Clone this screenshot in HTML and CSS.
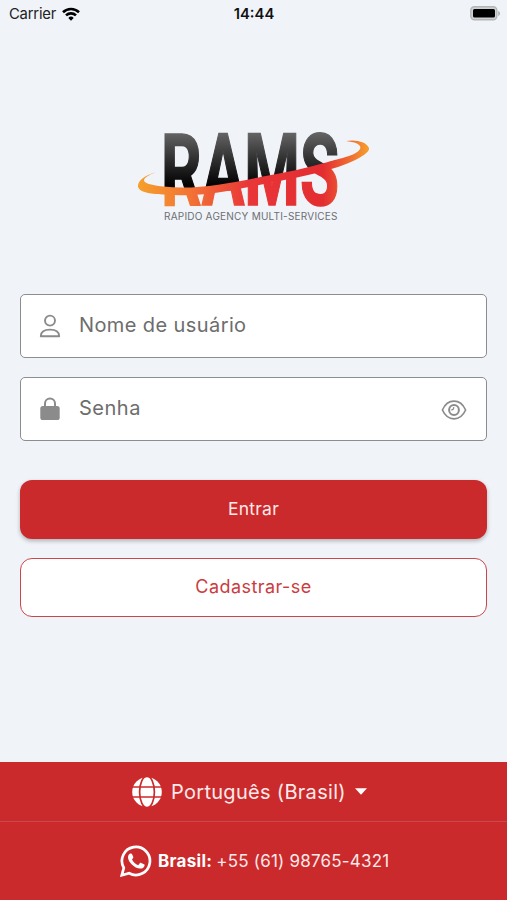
FILE: index.html
```
<!DOCTYPE html>
<html lang="pt-BR">
<head>
    <meta charset="UTF-8">
    <meta name="viewport" content="width=device-width, initial-scale=1.0">
    <title>RAMS</title>
    <link rel="stylesheet" href="styles.css">
</head>
<body>
    <div class="status-bar">
        <div class="carrier">
            <span>Carrier</span>
            <svg width="18" height="14" viewBox="0 0 18 14" fill="none" stroke="#000" stroke-width="2.6">
                <path d="M1 5.2a11.6 11.6 0 0 1 16 0"/>
                <path d="M4 8.4a7.2 7.2 0 0 1 10 0"/>
                <path d="M9 13.7L6.3 10.9a3.9 3.9 0 0 1 5.4 0z" fill="#000" stroke="none"/>
            </svg>
        </div>
        <span class="time">14:44</span>
        <svg class="battery" width="31" height="15" viewBox="0 0 31 15">
            <rect x=".8" y=".8" width="26" height="13" rx="3.5" fill="#cfd1d3" stroke="#b3b5b7" stroke-width="1.4"/>
            <rect x="3" y="3" width="22" height="8.6" rx="1.5" fill="#000"/>
            <path d="M28.2 5v5c2.4-1 2.4-4 0-5z" fill="#adafb1"/>
        </svg>
    </div>

    <div class="container">
        <svg class="logo" width="240" height="100" viewBox="134 126 240 100">
            <defs>
                <linearGradient id="dark" x1="0" y1="132" x2="0" y2="186" gradientUnits="userSpaceOnUse">
                    <stop offset="0" stop-color="#666"/>
                    <stop offset=".5" stop-color="#303030"/>
                    <stop offset="1" stop-color="#000"/>
                </linearGradient>
                <linearGradient id="fire" x1="138" y1="0" x2="369" y2="0" gradientUnits="userSpaceOnUse">
                    <stop offset="0" stop-color="#f5a02c"/>
                    <stop offset=".22" stop-color="#f37435"/>
                    <stop offset=".48" stop-color="#e93638"/>
                    <stop offset=".8" stop-color="#e32d31"/>
                    <stop offset=".91" stop-color="#ee6832"/>
                    <stop offset="1" stop-color="#f6a02c"/>
                </linearGradient>
                <pattern id="letters" x="134" y="126" width="240" height="100" patternUnits="userSpaceOnUse" viewBox="134 126 240 100">
                    <rect x="134" y="126" width="240" height="100" fill="url(#dark)"/>
                    <path d="M134 190C215 194 270 182 345 160V226H134z" fill="url(#fire)"/>
                </pattern>
            </defs>
            <text class="logo-name" x="161" y="205" textLength="178" lengthAdjust="spacingAndGlyphs" fill="url(#letters)" stroke="url(#letters)">RAMS</text>
            <path d="M156 172C144 176 139 180 138 185C137 192 149 194 163 194.5C190 197 218 193 236 189.5L297 177.5C312 174 326 171 338 167C358 160 370 153 369 148C367 142 356 139 346 141C356 142 362 145 360 149C356 156 339 158.5 328 162C307 168 284 173 263 176.5C227 184 195 190 163 186.5C139 184 139 179 156 172z" fill="url(#fire)"/>
            <text class="logo-tagline" x="164" y="220" textLength="173.5">RAPIDO AGENCY MULTI-SERVICES</text>
        </svg>

        <form class="login">
            <div class="field">
                <svg width="22" height="24" viewBox="0 0 22 24" fill="none" stroke="#8b8b8b" stroke-width="1.9">
                    <circle cx="11" cy="6.6" r="5"/>
                    <path d="M1.8 22.2c0-4.6 3.4-6.6 9.2-6.6s9.2 2 9.2 6.6z" stroke-linejoin="round"/>
                </svg>
                <span class="placeholder user">Nome de usuário</span>
            </div>
            <div class="field">
                <svg width="22" height="24" viewBox="0 0 22 24">
                    <path d="M6 10V6.5a5 5 0 0 1 10 0V10" fill="none" stroke="#8b8b8b" stroke-width="2"/>
                    <rect x="1.3" y="9" width="19.4" height="14" rx="2.6" fill="#8b8b8b"/>
                </svg>
                <span class="placeholder pass">Senha</span>
                <svg class="eye" width="26" height="20" viewBox="0 0 26 20" fill="none" stroke="#8b8b8b" stroke-width="1.7">
                    <path d="M1.4 10C4 4.2 8 1.2 13 1.2S22 4.2 24.6 10C22 15.8 18 18.8 13 18.8S4 15.8 1.4 10z" stroke-linejoin="round"/>
                    <circle cx="13" cy="10" r="4.9" stroke-width="2"/>
                    <path d="M12.6 7.2c.3 1.9-.6 2.8-2.4 2.6" stroke-width="1.3"/>
                </svg>
            </div>
            <button type="button" class="btn btn-primary">Entrar</button>
            <button type="button" class="btn btn-outline">Cadastrar-se</button>
        </form>
    </div>

    <div class="footer">
        <div class="language">
            <svg width="30" height="30" viewBox="0 0 30 30">
                <circle cx="15" cy="15" r="14.8" fill="#fff"/>
                <g fill="none" stroke="#cb2a2c" stroke-width="1.7">
                    <ellipse cx="15" cy="15" rx="7.4" ry="15.8"/>
                    <path d="M0 10h30M0 20h30"/>
                </g>
            </svg>
            <span class="language-name">Português (Brasil)</span>
            <svg class="caret" width="12" height="7" viewBox="0 0 12 7"><path d="M0 .3h12L6 6.8z" fill="#fff"/></svg>
        </div>
        <div class="contact">
            <svg width="32" height="32" viewBox="0 0 32 32">
                <path d="M1.8 30.2l2-7.3a14 14 0 1 1 5.4 5.3z" fill="none" stroke="#fff" stroke-width="2.7"/>
                <path d="M10.8 8.4c.7 0 1 .1 1.3.8l1.2 2.9c.2.6-.2 1.2-1.3 2.4 1.6 3 3.4 4.6 6.2 5.7l1.6-2c.4-.5.8-.5 1.3-.3l2.9 1.4c.6.3.7.6.5 1.4-.5 2-2.4 3-4.3 2.9C14.2 23.3 8 16.8 8 12.2c0-1.9 1-3.8 2.8-3.8z" fill="#fff"/>
            </svg>
            <strong>Brasil:</strong>
            <span class="phone">+55 (61) 98765-4321</span>
        </div>
    </div>
</body>
</html>
```
FILE: styles.css
```
* {
    box-sizing: border-box;
}

body {
    font-family: Inter, "Open Sans", sans-serif;
    background-color: #f0f4f9;
    display: flex;
    flex-direction: column;
    height: 900px;
    margin: 0;
}

.status-bar {
    display: grid;
    grid-template-columns: 1fr auto 1fr;
    align-items: center;
    height: 27px;
    padding: 0 6px 0 9px;
    font-size: 14.8px;
    color: #222;
}

.carrier {
    display: flex;
    align-items: center;
    gap: 6px;
    letter-spacing: -0.2px;
}

.time {
    margin-right: 2px;
    font-weight: 600;
    color: #111;
}

.battery {
    justify-self: end;
}

.container {
    flex: 1;
    display: flex;
    flex-direction: column;
    padding: 99px 20px 0;
}

.logo {
    margin-left: 114px;
    overflow: visible;
}

.logo-name {
    font-family: Roboto, sans-serif;
    font-size: 101px;
    font-weight: 700;
    stroke-width: 1.6px;
}

.logo-tagline {
    font-size: 10px;
    fill: #6c6e72;
}

.login {
    display: flex;
    flex-direction: column;
    margin-top: 68px;
}

.field {
    display: flex;
    align-items: center;
    height: 64px;
    margin-bottom: 19px;
    padding: 0 19px 0 18px;
    background-color: #fff;
    border: 1.5px solid #8b8d8f;
    border-radius: 5px;
}

.placeholder {
    flex: 1;
    margin-left: 18px;
    padding-bottom: 3px;
    font-size: 20px;
    color: #6d6d6d;
}

.user {
    letter-spacing: 0.4px;
}

.pass {
    letter-spacing: 0.5px;
}

.eye {
    margin-top: 1px;
}

.btn {
    height: 59px;
    padding-bottom: 3px;
    font-family: inherit;
    font-size: 17.5px;
    border-radius: 12px;
}

.btn-primary {
    margin: 20px 0 19px;
    color: #fde9e9;
    background-color: #cb2a2c;
    border: none;
    letter-spacing: 0.25px;
    box-shadow: 0 2px 4px rgba(0, 0, 0, 0.28);
}

.btn-outline {
    font-size: 18px;
    color: #cb3c40;
    background-color: #fff;
    border: 1.5px solid #cb4549;
    letter-spacing: 0.45px;
}

.footer {
    height: 138px;
    color: #fde9e9;
    background-color: #cb2a2c;
}

.language {
    display: flex;
    align-items: center;
    height: 60px;
    padding-left: 132px;
    border-bottom: 1px solid #c9494c;
}

.language-name {
    margin-left: 9px;
    font-size: 20px;
    letter-spacing: 0.3px;
}

.caret {
    margin-left: 9px;
}

.contact {
    display: flex;
    align-items: center;
    height: 78px;
    padding-left: 120px;
    font-size: 17px;
}

.contact strong {
    margin: 0 4px 0 6px;
    color: #fff;
    letter-spacing: 0.3px;
}

.phone {
    letter-spacing: 0.2px;
}
```
